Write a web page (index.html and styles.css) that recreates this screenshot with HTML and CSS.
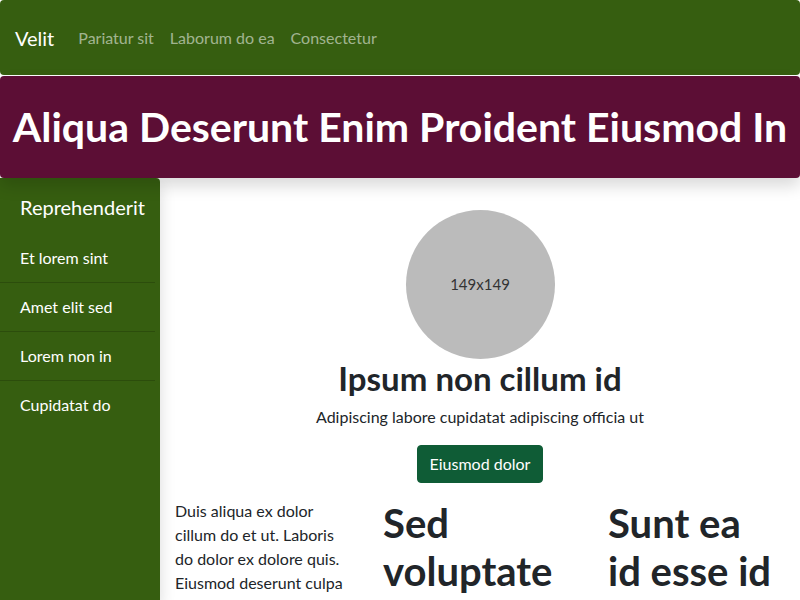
FILE: index.html
```html
<!DOCTYPE html>
<html lang="en">
<head>
<meta charset="utf-8">
<title>Velit</title>
<link rel="stylesheet" href="styles.css">
</head>
<body>
<nav class="navbar">
  <a class="brand" href="#">Velit</a>
  <ul class="nav-links">
    <li><a href="#">Pariatur sit</a></li>
    <li><a href="#">Laborum do ea</a></li>
    <li><a href="#">Consectetur</a></li>
  </ul>
</nav>
<header class="banner">
  <h1 class="banner-title">Aliqua Deserunt Enim Proident Eiusmod In</h1>
</header>
<div class="layout">
  <aside class="sidebar">
    <div class="sidebar-title">Reprehenderit</div>
    <ul class="side-list">
      <li>Et lorem sint</li>
      <li>Amet elit sed</li>
      <li>Lorem non in</li>
      <li>Cupidatat do</li>
    </ul>
  </aside>
  <main class="main">
    <section class="hero">
      <div class="avatar">149x149</div>
      <h2 class="hero-title">Ipsum non cillum id</h2>
      <p class="hero-text">Adipiscing labore cupidatat adipiscing officia ut</p>
      <button class="btn">Eiusmod dolor</button>
    </section>
    <section class="cols">
      <div class="col"><p class="col-text">Duis aliqua ex dolor cillum do et ut. Laboris do dolor ex dolore quis. Eiusmod deserunt culpa</p></div>
      <div class="col"><h1 class="col-title">Sed voluptate</h1></div>
      <div class="col col-last"><h1 class="col-title">Sunt ea id esse id</h1></div>
    </section>
  </main>
</div>
</body>
</html>
```
FILE: styles.css
```css
* { box-sizing: border-box; }
html, body { margin: 0; padding: 0; }
body {
  font-family: "Lato", "Noto Sans", sans-serif;
  font-size: 16px;
  line-height: 1.5;
  color: #212529;
  background: #fff;
  overflow: hidden;
  height: 600px;
}
.navbar {
  background: #365e10;
  height: 75px;
  display: flex;
  align-items: center;
  padding: 0 15px;
  border-radius: 4px;
}
.brand {
  color: #fff;
  font-size: 20px;
  text-decoration: none;
  margin-right: 24px;
}
.nav-links {
  list-style: none;
  display: flex;
  margin: 0;
  padding: 0;
}
.nav-links li + li { margin-left: 2px; }
.nav-links a {
  display: block;
  color: rgba(255,255,255,.55);
  text-decoration: none;
  padding: 8px 7px;
}
.nav-links li:first-child a { padding-left: 0; }
.banner {
  background: #5c0e35;
  height: 102px;
  margin-top: 1px;
  border-radius: 4px;
  display: flex;
  align-items: center;
  justify-content: center;
  box-shadow: 0 8px 16px rgba(0,0,0,.15);
  position: relative;
  z-index: 2;
}
.banner-title {
  margin: 0;
  color: #fff;
  font-size: 41px;
  font-weight: 700;
  line-height: 1.2;
  white-space: nowrap;
}
.layout {
  display: flex;
  height: 422px;
}
.sidebar {
  width: 160px;
  flex: none;
  background: #365e10;
  color: #fff;
  border-top-right-radius: 4px;
  box-shadow: 0 8px 16px rgba(0,0,0,.15);
  position: relative;
  z-index: 1;
}
.sidebar-title {
  font-size: 20px;
  line-height: 30px;
  padding: 14px 20px 12px;
}
.side-list {
  list-style: none;
  margin: 0 5px 0 0;
  padding: 0;
}
.side-list li {
  padding: 12px 0 12px 20px;
  line-height: 24px;
  font-size: 16px;
  border-bottom: 1px solid #2c4d0c;
}
.side-list li:last-child { border-bottom: none; }
.main {
  flex: 1;
  min-width: 0;
}
.hero {
  display: flex;
  flex-direction: column;
  align-items: center;
  padding-top: 32px;
}
.avatar {
  width: 149px;
  height: 149px;
  border-radius: 50%;
  background: #bbb;
  color: #333;
  font-size: 15px;
  display: flex;
  align-items: center;
  justify-content: center;
}
.hero-title {
  margin: 0 0 6px;
  font-size: 33px;
  font-weight: 700;
  line-height: 1.2;
}
.hero-text {
  margin: 0 0 16px;
  font-size: 16px;
}
.btn {
  font-family: inherit;
  font-size: 16px;
  line-height: 24px;
  padding: 6px 12px;
  color: #fff;
  background: #0f5c36;
  border: 1px solid #0f5c36;
  border-radius: 4px;
  margin-bottom: 16px;
}
.cols {
  display: grid;
  grid-template-columns: 208px 225px 1fr;
}
.col { padding: 0 15px; }
.col-last { padding-right: 22px; }
.col-text { margin: 0; font-size: 16px; }
.col-title {
  margin: 0;
  font-size: 40px;
  font-weight: 700;
  line-height: 1.2;
}
```
